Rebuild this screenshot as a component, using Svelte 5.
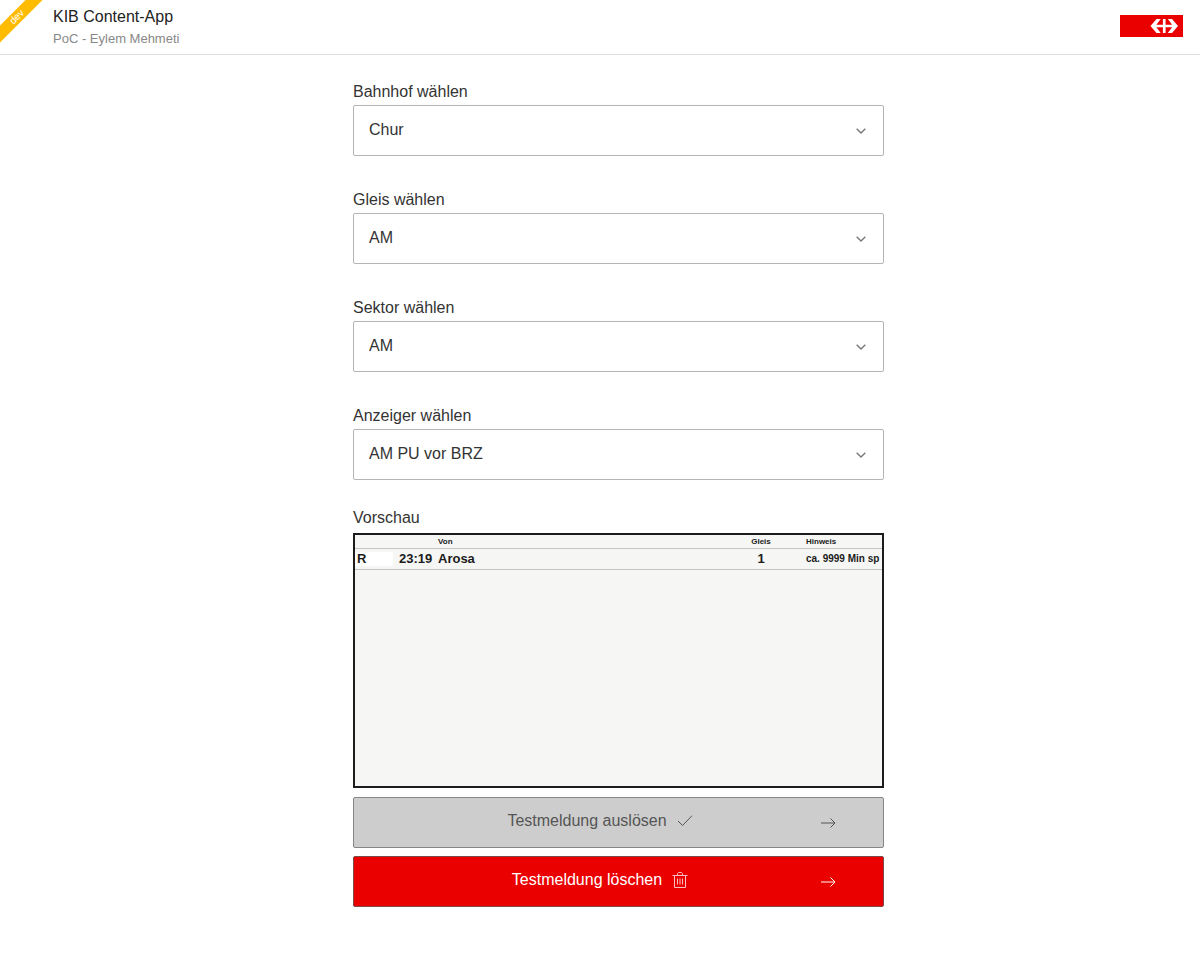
<script lang='ts'>
  interface Field {
    id: string
    label: string
    value: string
    options: string[]
  }

  interface Departure {
    line: string
    time: string
    from: string
    track: string
    note: string
  }

  let fields: Field[] = $state([
    { id: 'station', label: 'Bahnhof wählen', value: 'Chur', options: ['Chur'] },
    { id: 'track', label: 'Gleis wählen', value: 'AM', options: ['AM'] },
    { id: 'sector', label: 'Sektor wählen', value: 'AM', options: ['AM'] },
    { id: 'display', label: 'Anzeiger wählen', value: 'AM PU vor BRZ', options: ['AM PU vor BRZ'] },
  ])

  const departures: Departure[] = [
    { line: 'R', time: '23:19', from: 'Arosa', track: '1', note: 'ca. 9999 Min sp' },
  ]
</script>

{#snippet arrow()}
  <svg class='arrow' viewBox='0 0 16 12' aria-hidden='true'>
    <path d='M1 6h14M10.500 1.500L15 6l-4.500 4.500' />
  </svg>
{/snippet}

<header class='header'>
  <div class='ribbon'><span>dev</span></div>
  <div class='titles'>
    <h1>KIB Content-App</h1>
    <p>PoC - Eylem Mehmeti</p>
  </div>
  <svg class='logo' viewBox='0 0 63 22' role='img' aria-label='SBB'>
    <rect width='63' height='22' fill='#eb0000' />
    <path
      d='M36.500 4h4.200L36.400 9.800H42.900V4h2.700v5.800h6.500L47.800 4H52l6 7-6 7h-4.200l4.300-5.800h-6.500V18h-2.700v-5.800h-6.500L40.700 18h-4.200l-6-7z'
      fill='#fff'
    />
  </svg>
</header>

<main>
  <form class='form' onsubmit={(event) => event.preventDefault()}>
    {#each fields as field (field.id)}
      <div class='field'>
        <label for={field.id}>{field.label}</label>
        <div class='select'>
          <select id={field.id} bind:value={field.value}>
            {#each field.options as option}
              <option value={option}>{option}</option>
            {/each}
          </select>
          <svg class='chevron' viewBox='0 0 10 6' aria-hidden='true'>
            <path d='M0.700 0.700L5 5l4.300-4.300' />
          </svg>
        </div>
      </div>
    {/each}

    <h2>Vorschau</h2>
    <div class='preview'>
      <table>
        <thead>
          <tr>
            <th class='line'></th>
            <th class='time'></th>
            <th class='from'>Von</th>
            <th class='track'>Gleis</th>
            <th class='note'>Hinweis</th>
          </tr>
        </thead>
        <tbody>
          {#each departures as departure}
            <tr>
              <td class='line'><span>{departure.line}</span></td>
              <td class='time'>{departure.time}</td>
              <td class='from'>{departure.from}</td>
              <td class='track'>{departure.track}</td>
              <td class='note'>{departure.note}</td>
            </tr>
          {/each}
        </tbody>
      </table>
    </div>

    <button type='submit' class='button' disabled>
      <span class='caption'>
        Testmeldung auslösen
        <svg class='check' viewBox='0 0 16 12' aria-hidden='true'>
          <path d='M1 6l4.500 4.500L15 0.700' />
        </svg>
      </span>
      {@render arrow()}
    </button>
    <button type='button' class='button primary'>
      <span class='caption'>
        Testmeldung löschen
        <svg class='trash' viewBox='0 0 16 17' aria-hidden='true'>
          <path d='M0.500 3.500h15M2.500 3.500v12h11v-12M5.500 3.500v-2l1-1h3l1 1v2M5.500 6.500v6M8 6.500v6M10.500 6.500v6' />
        </svg>
      </span>
      {@render arrow()}
    </button>
  </form>
</main>

<style>
  :global(body) {
    margin: 0;
    background: #fff;
    color: #333;
    font-family: 'Helvetica Neue', 'Liberation Sans', Arial, sans-serif;
    font-size: 16px;
    line-height: 20px;
  }

  .header {
    position: relative;
    display: flex;
    align-items: flex-start;
    justify-content: space-between;
    padding: 7px 17px 5px 53px;
    border-bottom: 1px solid #dcdcdc;
    overflow: hidden;
  }

  .ribbon {
    position: absolute;
    top: 11px;
    left: -33px;
    width: 100px;
    background: #ffbb00;
    color: #fff;
    font-size: 10px;
    line-height: 12px;
    text-align: center;
    transform: rotate(-45deg);
  }

  h1,
  h2,
  p {
    margin: 0;
    font-weight: 400;
  }

  h1 {
    color: #222;
    font-size: 16px;
    line-height: 20px;
  }

  p {
    color: #888;
    font-size: 13px;
    line-height: 20px;
    padding-top: 2px;
  }

  .logo {
    width: 63px;
    height: 22px;
    margin-top: 8px;
  }

  main {
    padding: 27px 16px 32px 53px;
  }

  .form {
    display: flex;
    flex-direction: column;
    max-width: 531px;
    margin: 0 auto;
  }

  .field {
    display: flex;
    flex-direction: column;
    gap: 3px;
    margin-bottom: 34px;
  }

  .select {
    display: grid;
    align-items: center;
  }

  .select > * {
    grid-area: 1 / 1;
  }

  select {
    width: 100%;
    height: 51px;
    padding: 0 48px 2px 15px;
    border: 1px solid #b4b4b4;
    border-radius: 2px;
    background: #fff;
    color: #333;
    font: inherit;
    appearance: none;
  }

  .chevron {
    justify-self: end;
    width: 10px;
    height: 6px;
    margin-right: 18px;
    pointer-events: none;
  }

  .chevron path {
    fill: none;
    stroke: #777;
    stroke-width: 1.4;
  }

  h2 {
    margin: -6px 0 5px;
    font-size: 16px;
    line-height: 20px;
  }

  .preview {
    box-sizing: border-box;
    height: 255px;
    margin-bottom: 9px;
    border: 2px solid #1c1c1c;
    background: #f6f6f5;
    overflow: hidden;
  }

  table {
    width: 100%;
    table-layout: fixed;
    border-collapse: collapse;
    color: #1c1c1c;
    font-weight: 700;
  }

  th,
  td {
    padding: 0;
    border-bottom: 1px solid #c4c4c4;
    text-align: left;
    white-space: nowrap;
  }

  th {
    height: 13px;
    font-size: 8px;
    line-height: 12px;
  }

  td {
    height: 20px;
    font-size: 13px;
    line-height: 20px;
  }

  .line {
    width: 44px;
  }

  .line span {
    display: block;
    width: 36px;
    padding-left: 2px;
    background: #fff;
    line-height: 14px;
  }

  .time {
    width: 39px;
  }

  .track {
    width: 60px;
    text-align: center;
  }

  .note {
    width: 91px;
    padding-left: 15px;
    box-sizing: border-box;
  }

  td.note {
    font-size: 10px;
  }

  .button {
    display: grid;
    align-items: center;
    height: 51px;
    margin-bottom: 8px;
    padding: 0 47px 0 0;
    border: 1px solid #868686;
    border-radius: 2px;
    background: #cdcdcd;
    color: #555;
    font: inherit;
  }

  .button > * {
    grid-area: 1 / 1;
  }

  .button.primary {
    border-color: #7d4a4a;
    background: #eb0000;
    color: #fff;
    cursor: pointer;
  }

  .caption {
    display: flex;
    align-items: center;
    justify-content: center;
    gap: 10px;
    padding: 0 0 3px 10px;
  }

  .button svg {
    fill: none;
    stroke: currentColor;
  }

  .arrow {
    justify-self: end;
    width: 16px;
    height: 12px;
  }

  .check {
    width: 16px;
    height: 12px;
  }

  .trash {
    width: 16px;
    height: 17px;
    opacity: 0.75;
  }
</style>
